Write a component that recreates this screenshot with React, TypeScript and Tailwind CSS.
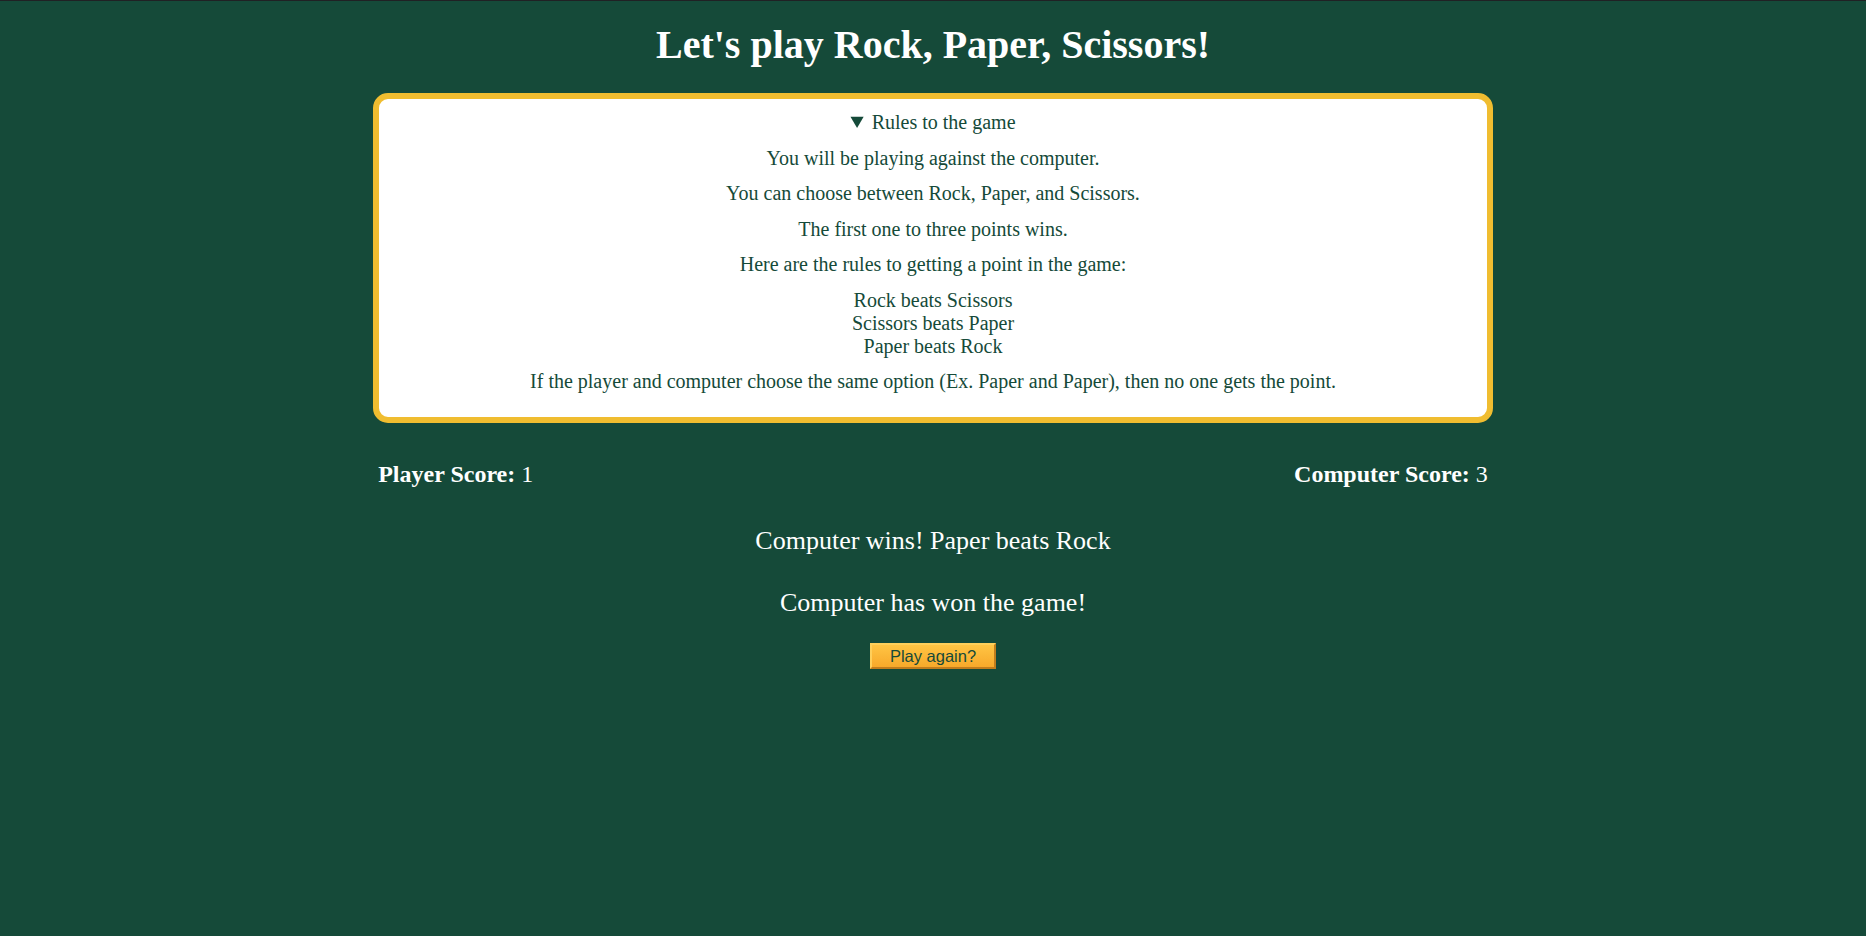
import React from "react";

const rules = [
  "You will be playing against the computer.",
  "You can choose between Rock, Paper, and Scissors.",
  "The first one to three points wins.",
  "Here are the rules to getting a point in the game:",
];

export default function App() {
  return (
    <div className="min-h-screen border-t border-[#202124] bg-[#154a39] font-['Liberation_Serif',serif] text-white">
      <h1 className="pt-[21px] text-center text-[40px] font-bold leading-[46px]">
        Let's play Rock, Paper, Scissors!
      </h1>

      <div className="mx-auto w-[60%]">
        <details
          open
          className="mt-[25px] rounded-[15px] border-[6px] border-[#f0bd30] bg-white px-4 py-3 text-center text-[20px] leading-[23px] text-[#154a39]"
        >
          <summary className="cursor-pointer">Rules to the game</summary>
          {rules.map((r) => (
            <p key={r} className="my-[12.5px]">
              {r}
            </p>
          ))}
          <p className="my-[12.5px]">
            Rock beats Scissors
            <br />
            Scissors beats Paper
            <br />
            Paper beats Rock
          </p>
          <p className="mt-[12.5px] mb-3">
            If the player and computer choose the same option (Ex. Paper and
            Paper), then no one gets the point.
          </p>
        </details>

        <div className="mt-[37px] flex justify-between px-[5px] text-[24px] leading-[28px]">
          <div>
            <span className="font-bold">Player Score:</span> 1
          </div>
          <div>
            <span className="font-bold">Computer Score:</span> 3
          </div>
        </div>

        <p className="mt-[38px] text-center text-[26px] leading-[30px]">
          Computer wins! Paper beats Rock
        </p>
        <p className="mt-[32px] text-center text-[26px] leading-[30px]">
          Computer has won the game!
        </p>

        <div className="mt-[25px] flex justify-center">
          <button className="border-2 border-t-[#ffcf5a] border-l-[#ffcf5a] border-r-[#c27d1c] border-b-[#c27d1c] bg-gradient-to-b from-[#ffc443] to-[#f7a92a] px-[18px] py-[2px] font-['Liberation_Sans',Arial,sans-serif] text-[16.5px] leading-[18px] text-[#154a39]">
            Play again?
          </button>
        </div>
      </div>
    </div>
  );
}
